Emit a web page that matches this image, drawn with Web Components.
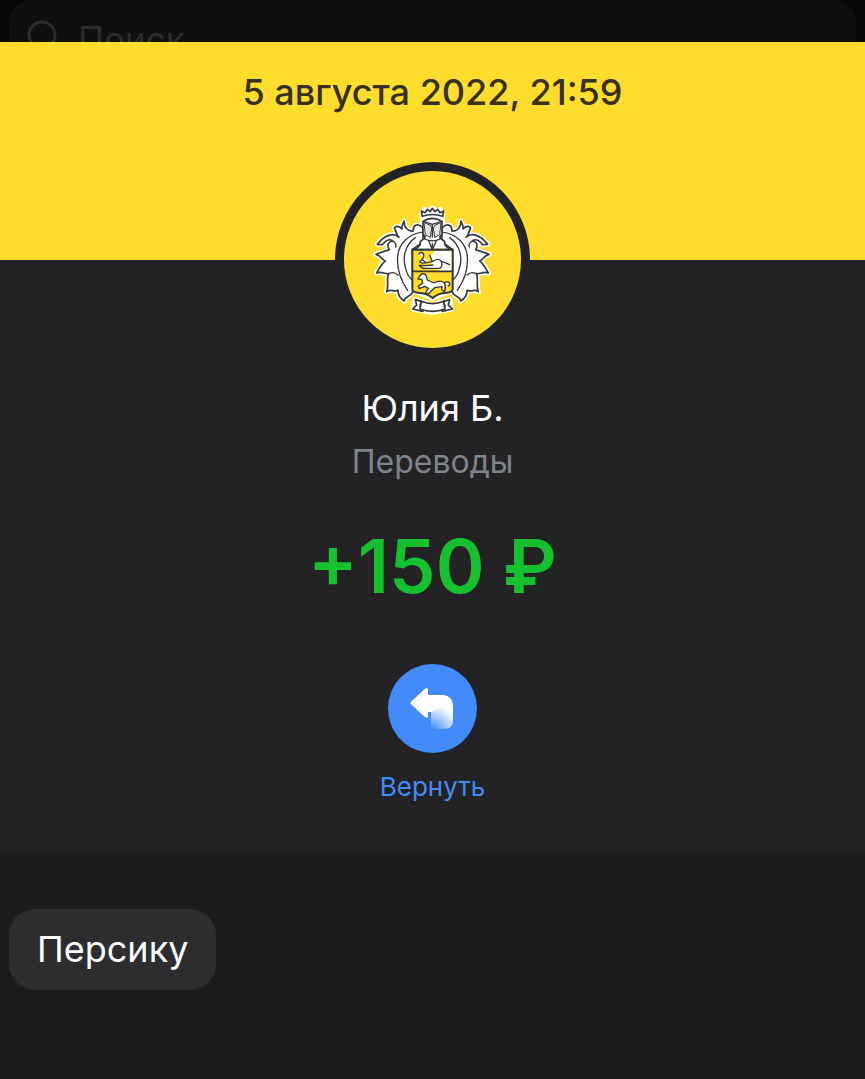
<!DOCTYPE html>
<html lang="ru">
<head>
  <meta charset="UTF-8">
  <meta name="viewport" content="width=device-width, initial-scale=1.0">
  <title>Операция</title>
  <style>
    body {
      margin: 0;
      background: #1d1d1f;
      font-family: Inter, "Liberation Sans", sans-serif;
      --accent: #428bf9;
      --brand: #ffdd2d;
      --surface: #232325;
    }
  </style>
</head>
<body>
  <operation-page></operation-page>

  <template id="operation-page">
    <style>
      :host {
        display: flex;
        flex-direction: column;
        height: 100vh;
        overflow: hidden;
      }
      search-bar {
        flex: none;
      }
      operation-sheet {
        flex: 1;
      }
    </style>
    <search-bar>Поиск</search-bar>
    <operation-sheet>
      <span slot="date">5 августа 2022, 21:59</span>
      <brand-crest slot="logo"></brand-crest>
      <span slot="name">Юлия Б.</span>
      <span slot="category">Переводы</span>
      <span slot="amount">+150 ₽</span>
      <round-action slot="action">Вернуть</round-action>
      <message-chip slot="message">Персику</message-chip>
    </operation-sheet>
  </template>

  <!-- The dimmed screen that stays visible behind the sheet -->
  <template id="search-bar">
    <style>
      :host {
        display: block;
        height: 42px;
        padding: 0 9px;
        overflow: hidden;
        box-sizing: border-box;
        background: #070707;
      }
      label {
        display: flex;
        align-items: center;
        gap: 18px;
        height: 78px;
        padding: 0 17px;
        border-radius: 22px;
        box-sizing: border-box;
        background: #0f0f10;
      }
      svg {
        flex: none;
        width: 34px;
        height: 38px;
      }
      input {
        flex: 1;
        min-width: 0;
        padding: 0;
        border: 0;
        outline: 0;
        background: none;
        color: #2b2b2c;
        font: 35px/40px Inter, "Liberation Sans", sans-serif;
      }
      input::placeholder {
        color: #2b2b2c;
        opacity: 1;
      }
    </style>
    <label>
      <svg viewBox="0 0 34 38" fill="none" stroke="#2b2b2c" stroke-width="3" aria-hidden="true">
        <circle cx="16" cy="15" r="13"/>
        <path d="M25 26l8 9"/>
      </svg>
      <input type="search" aria-label="Поиск">
    </label>
  </template>

  <template id="operation-sheet">
    <style>
      :host {
        display: flex;
        flex-direction: column;
        text-align: center;
      }
      header {
        /* the logo hangs over the edge of the next section */
        position: relative;
        z-index: 1;
        display: flex;
        flex-direction: column;
        align-items: center;
        gap: 48px;
        height: 218px;
        padding-top: 28px;
        box-sizing: border-box;
        background: var(--brand);
        color: #38301f;
        font-size: 36px;
        font-weight: 500;
        line-height: 44px;
      }
      main {
        display: flex;
        flex-direction: column;
        align-items: center;
        padding: 126px 16px 52px;
        background: var(--surface);
      }
      h1, p {
        margin: 0;
      }
      h1 {
        color: #fff;
        font-size: 36px;
        font-weight: 400;
        line-height: 44px;
      }
      .category {
        margin-top: 12px;
        color: #7f838c;
        font-size: 32px;
        line-height: 40px;
      }
      .amount {
        margin: 40px 0 54px;
        color: #16c12f;
        font-size: 74px;
        font-weight: 600;
        line-height: 88px;
      }
      footer {
        flex: 1;
        padding: 54px 9px;
        text-align: left;
      }
    </style>
    <header>
      <slot name="date"></slot>
      <slot name="logo"></slot>
    </header>
    <main>
      <h1><slot name="name"></slot></h1>
      <p class="category"><slot name="category"></slot></p>
      <p class="amount"><slot name="amount"></slot></p>
      <slot name="action"></slot>
    </main>
    <footer>
      <slot name="message"></slot>
    </footer>
  </template>

  <template id="brand-crest">
    <style>
      :host {
        display: flex;
        flex: none;
        align-items: center;
        justify-content: center;
        width: 195px;
        height: 195px;
        box-sizing: border-box;
        border: 9px solid var(--surface);
        border-radius: 50%;
        background: var(--brand);
      }
      svg {
        flex: none;
        width: 145px;
        height: 130px;
      }
    </style>
    <svg viewBox="0 0 435 390" role="img" aria-label="Герб" stroke-linejoin="round" stroke-linecap="round">
      <defs>
        <path id="mantle" d="M188 98C172 82 158 92 160 108C144 110 132 98 132 78C126 90 124 94 126 102C118 92 106 92 103 100C110 108 108 120 117 127C103 112 76 117 52 148L68 149C76 136 88 130 98 138C84 140 80 151 88 164C74 168 60 174 48 178C62 180 64 194 76 198C66 204 60 218 50 234C66 228 72 238 86 236C78 248 88 268 80 290C94 280 100 292 114 286C114 300 122 312 133 318C132 304 152 308 159 290L157 164L190 140Z"/>
        <path id="veins" d="M184 112C150 116 116 144 113 184C110 222 122 256 143 286M166 128C134 150 126 190 138 224C142 240 150 250 157 254M98 138C106 142 109 150 107 156M86 236C98 230 108 234 114 240"/>
      </defs>
      <g fill="#fff" stroke="#fff" stroke-width="15">
        <use href="#mantle"/>
        <use href="#mantle" transform="translate(435 0) scale(-1 1)"/>
        <path d="M186 53L194 43L203 51L217 39L231 51L240 43L248 53V130L278 164V284L218 310L158 284V164L188 130ZM165 314L217 330L270 314L273 343L217 352L160 343Z"/>
      </g>
      <g fill="#fff" stroke="#38383a" stroke-width="5">
        <use href="#mantle"/>
        <use href="#mantle" transform="translate(435 0) scale(-1 1)"/>
        <g fill="none" stroke-width="4">
          <use href="#veins"/>
          <use href="#veins" transform="translate(435 0) scale(-1 1)"/>
        </g>
        <path d="M187 64L184 48L195 53L202 43L210 50L217 40L225 50L233 43L240 53L251 48L248 64Q217 53 187 64Z"/>
        <path d="M189 79Q217 61 246 79V116L239 127L254 140Q252 158 278 164H157Q183 158 181 140L196 127L189 116Z"/>
        <path d="M193 83L211 91L215 99L211 127L197 120ZM242 83L224 91L220 99L224 127L238 120Z" fill="#e6e4dd" stroke-width="3"/>
        <path d="M190 79L217 88L245 79M217 88V126M194 132Q217 143 241 132M206 137L217 164L229 137M217 145V157" fill="none" stroke-width="4"/>
        <path d="M157 164H278V282Q278 292 260 293Q232 295 218 309Q202 295 175 293Q157 292 157 282Z" fill="#ffdd2d" stroke-width="6"/>
        <path d="M222 168H274V227H234Q245 210 235 197Q226 190 218 197L211 181Q222 176 222 168Z" stroke="none"/>
        <path d="M158 229H277" fill="none"/>
        <path d="M177 177Q185 166 191 178Q192 189 186 193L198 203L217 200Q234 187 243 198Q250 210 240 220H197Q183 220 178 211L199 212L219 210M187 193L179 200Q186 207 198 203M217 200L209 181M243 198L269 209" stroke-width="4"/>
        <path d="M180 242Q187 232 197 239L202 255L222 264Q245 252 254 265Q259 278 253 290L245 284L246 275L224 278L207 295H195L205 280L194 274L178 281L175 274L188 264L185 253L174 252ZM252 264Q267 256 270 268L265 273" stroke-width="4"/>
        <path d="M166 314L184 319L180 334L197 340L188 349L158 342L170 330ZM269 314L251 319L255 334L238 340L247 349L277 342L265 330Z"/>
        <path d="M184 319Q217 333 251 319L255 342Q217 356 180 342Z"/>
      </g>
    </svg>
  </template>

  <template id="round-action">
    <style>
      :host {
        display: block;
      }
      button {
        display: flex;
        flex-direction: column;
        align-items: center;
        gap: 18px;
        padding: 0;
        border: 0;
        background: none;
        color: var(--accent);
        font: 26px/32px Inter, "Liberation Sans", sans-serif;
        cursor: pointer;
      }
      svg {
        width: 89px;
        height: 89px;
        border-radius: 50%;
        background: var(--accent);
      }
    </style>
    <button type="button">
      <svg viewBox="0 0 89 89" aria-hidden="true">
        <defs>
          <!-- only the tail of the arrow fades out, towards its lower left end -->
          <radialGradient id="fade" gradientUnits="userSpaceOnUse" cx="44" cy="68" r="27">
            <stop offset="0.1" stop-color="#fff" stop-opacity="0"/>
            <stop offset="1" stop-color="#fff"/>
          </radialGradient>
        </defs>
        <path d="M23 38L37 25Q40 23 40 27V31H53Q65 31 65 43V56Q65 65 56 65H43V48H40V52Q40 55 37 53L23 40Q22 39 23 38Z" fill="url(#fade)"/>
        <path d="M23 38L37 25Q40 23 40 27V31H53Q62 31 64 39Q58 44 52 44L43 48H40V52Q40 55 37 53L23 40Q22 39 23 38Z" fill="#fff"/>
      </svg>
      <span><slot></slot></span>
    </button>
  </template>

  <template id="message-chip">
    <style>
      :host {
        display: inline-flex;
      }
      button {
        padding: 18px 28px 19px;
        border: 0;
        border-radius: 26px;
        background: #2d2d2f;
        color: #fff;
        font: 36px/44px Inter, "Liberation Sans", sans-serif;
        cursor: pointer;
      }
    </style>
    <button type="button"><slot></slot></button>
  </template>

  <script>
    class TemplateElement extends HTMLElement {
      constructor() {
        super();
        this.attachShadow({ mode: 'open' });
        const $template = document.querySelector(`template#${this.localName}`);
        this.shadowRoot.appendChild(document.importNode($template.content, true));
      }
    }

    class SearchBar extends TemplateElement {
      connectedCallback() {
        // The label passed in becomes the placeholder of the field
        const $input = this.shadowRoot.querySelector('input');
        $input.placeholder = this.textContent.trim();
      }
    }

    customElements.define('search-bar', SearchBar);
    customElements.define('brand-crest', class extends TemplateElement {});
    customElements.define('round-action', class extends TemplateElement {});
    customElements.define('message-chip', class extends TemplateElement {});
    customElements.define('operation-sheet', class extends TemplateElement {});
    customElements.define('operation-page', class extends TemplateElement {});
  </script>
</body>
</html>
